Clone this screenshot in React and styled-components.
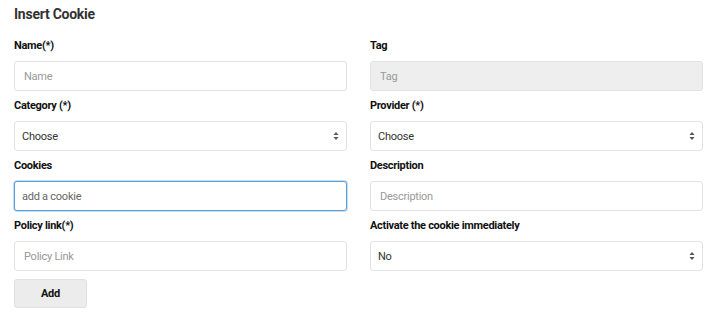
import React from 'react';
import styled, { createGlobalStyle } from 'styled-components';

const GlobalStyle = createGlobalStyle`
  html, body {
    margin: 0;
    padding: 0;
    background: #fff;
  }
  body {
    font-family: Roboto, "Liberation Sans", Arial, sans-serif;
    color: #333;
  }
  * {
    box-sizing: border-box;
  }
`;

const Page = styled.div`
  width: 720px;
  padding: 4px 17px 0 14px;
`;

const Title = styled.h3`
  margin: 0 0 13px;
  font-size: 14px;
  line-height: 20px;
  font-weight: 700;
  letter-spacing: -0.25px;
  color: #333;
`;

const Grid = styled.div`
  display: grid;
  grid-template-columns: 1fr 1fr;
  column-gap: 23px;
`;

const Field = styled.div`
  display: flex;
  flex-direction: column;
  margin-bottom: 6px;
`;

const Label = styled.label`
  font-size: 11px;
  line-height: 16px;
  font-weight: 700;
  letter-spacing: -0.3px;
  color: #111;
  padding-top: 1px;
  margin-bottom: 7px;
`;

const Input = styled.input`
  height: 30px;
  width: 100%;
  padding: 0 ${({ $focused }) => ($focused ? '7px' : '9px')};
  font-family: inherit;
  font-size: 11px;
  letter-spacing: -0.25px;
  color: #333;
  background: ${({ disabled }) => (disabled ? '#eee' : '#fff')};
  border: 1px solid ${({ $focused }) => ($focused ? '#5b9dd9' : '#e3e3e3')};
  border-radius: 3px;
  outline: none;
  box-shadow: ${({ $focused }) => ($focused ? '0 0 0 1px rgba(91,157,217,0.35)' : 'none')};

  &::placeholder {
    color: ${({ $focused }) => ($focused ? '#666' : '#999')};
  }
`;

const SelectWrap = styled.div`
  position: relative;
  height: 30px;
`;

const Select = styled.select`
  appearance: none;
  width: 100%;
  height: 30px;
  padding: 0 24px 0 7px;
  font-family: inherit;
  font-size: 11px;
  letter-spacing: -0.25px;
  color: #333;
  background: #fff;
  border: 1px solid #e3e3e3;
  border-radius: 3px;
  outline: none;
`;

const Arrows = styled.svg`
  position: absolute;
  right: 8px;
  top: 10px;
  pointer-events: none;
`;

const Button = styled.button`
  margin-top: 2px;
  width: 73px;
  height: 29px;
  font-family: inherit;
  font-size: 11px;
  font-weight: 700;
  letter-spacing: -0.2px;
  color: #111;
  background: #ececec;
  border: 1px solid #e0e0e0;
  border-radius: 3px;
`;

const ChooseSelect = ({ value, options }) => (
  <SelectWrap>
    <Select defaultValue={value}>
      {options.map((o) => (
        <option key={o}>{o}</option>
      ))}
    </Select>
    <Arrows width="6" height="10" viewBox="0 0 6 10">
      <path d="M3 1 L5.5 4 H0.5 Z" fill="#555" />
      <path d="M3 9 L5.5 6 H0.5 Z" fill="#555" />
    </Arrows>
  </SelectWrap>
);

const App = () => (
  <Page>
    <GlobalStyle />
    <Title>Insert Cookie</Title>
    <Grid>
      <Field>
        <Label>Name(*)</Label>
        <Input placeholder="Name" />
      </Field>
      <Field>
        <Label>Tag</Label>
        <Input placeholder="Tag" disabled />
      </Field>
      <Field>
        <Label>Category (*)</Label>
        <ChooseSelect value="Choose" options={['Choose']} />
      </Field>
      <Field>
        <Label>Provider (*)</Label>
        <ChooseSelect value="Choose" options={['Choose']} />
      </Field>
      <Field>
        <Label>Cookies</Label>
        <Input placeholder="add a cookie" $focused />
      </Field>
      <Field>
        <Label>Description</Label>
        <Input placeholder="Description" />
      </Field>
      <Field>
        <Label>Policy link(*)</Label>
        <Input placeholder="Policy Link" />
      </Field>
      <Field>
        <Label>Activate the cookie immediately</Label>
        <ChooseSelect value="No" options={['No', 'Yes']} />
      </Field>
    </Grid>
    <Button>Add</Button>
  </Page>
);

export default App;
